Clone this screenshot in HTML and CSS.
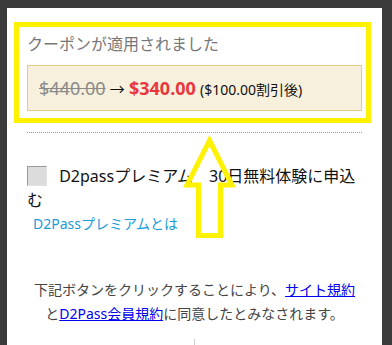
FILE: index.html
```html
<!DOCTYPE html>
<html lang="ja">
<head>
<meta charset="utf-8">
<title>クーポン</title>
<link rel="stylesheet" href="styles.css">
</head>
<body>
<div class="panel">
  <div class="coupon-title">クーポンが適用されました</div>
  <div class="price-box">
    <span class="old-price">$440.00</span>
    <span class="arrow">→</span>
    <span class="new-price">$340.00</span>
    <span class="discount">($100.00割引後)</span>
  </div>
  <div class="divider"></div>
  <label class="trial">
    <input type="checkbox" class="check">
    <span class="trial-text">D2passプレミアム　30日無料体験に申込む</span>
  </label>
  <a class="about" href="#">D2Passプレミアムとは</a>
  <p class="terms">下記ボタンをクリックすることにより、<a href="#">サイト規約</a><br>と<a href="#">D2Pass会員規約</a>に同意したとみなされます。</p>
  <div class="stub"></div>
</div>
<svg class="annotation" width="392" height="345" viewBox="0 0 392 345">
  <rect x="16.5" y="24.5" width="352" height="96" fill="none" stroke="#fff200" stroke-width="5"/>
  <polygon points="209.5,140.5 232,185 220.5,185 220.5,235.5 198.5,235.5 198.5,185 187,185" fill="none" stroke="#fff200" stroke-width="5" stroke-linejoin="miter" stroke-miterlimit="10"/>
</svg>
</body>
</html>
```
FILE: styles.css
```css
html, body {
  margin: 0;
  padding: 0;
}
body {
  background: #3b3b3b;
  width: 392px;
  height: 345px;
  overflow: hidden;
  position: relative;
  font-family: "Noto Sans", "Noto Sans CJK JP", sans-serif;
}
.panel {
  margin: 8px 0 0 7px;
  width: 375px;
  height: 337px;
  overflow: hidden;
  box-sizing: border-box;
  padding: 24px 20px 0;
  background: #fff;
}
.coupon-title {
  font-size: 16px;
  line-height: 24px;
  color: #777;
}
.price-box {
  margin-top: 9px;
  height: 46px;
  box-sizing: border-box;
  border: 1px solid #e3cd86;
  background: #f7f0dc;
  padding: 10px 11px;
  line-height: 24px;
  white-space: nowrap;
}
.old-price {
  font-size: 18px;
  color: #8a8a8a;
  text-decoration: line-through;
}
.arrow {
  font-size: 15px;
  color: #111;
}
.new-price {
  font-size: 18px;
  font-weight: bold;
  color: #e8383d;
}
.discount {
  font-size: 14px;
  color: #111;
}
.divider {
  margin-top: 21px;
  border-top: 1px dotted #999;
}
.trial {
  display: block;
  margin-top: 31px;
  font-size: 16px;
  line-height: 24px;
  color: #111;
}
.check {
  appearance: none;
  -webkit-appearance: none;
  display: inline-block;
  width: 20px;
  height: 20px;
  margin: 0 8px 0 0;
  vertical-align: -4px;
  box-sizing: border-box;
  background: #dcdcdc;
  border-left: 1px solid #9a9a9a;
  border-top: 1px solid #9a9a9a;
  border-right: 1px solid #e2e2e2;
  border-bottom: 1px solid #e2e2e2;
}
.about {
  display: block;
  margin-top: 2px;
  padding-left: 6px;
  font-size: 14px;
  line-height: 20px;
  color: #1b9bd8;
  text-decoration: none;
}
.terms {
  margin: 44px 0 0;
  text-align: center;
  font-size: 14px;
  line-height: 24px;
  color: #444;
}
.terms a {
  color: #0000ee;
  text-decoration: underline;
}
.stub {
  margin: 13px auto 0;
  width: 1px;
  height: 20px;
  background: #ccc;
}
.annotation {
  position: absolute;
  left: 0;
  top: 0;
  pointer-events: none;
}
```
